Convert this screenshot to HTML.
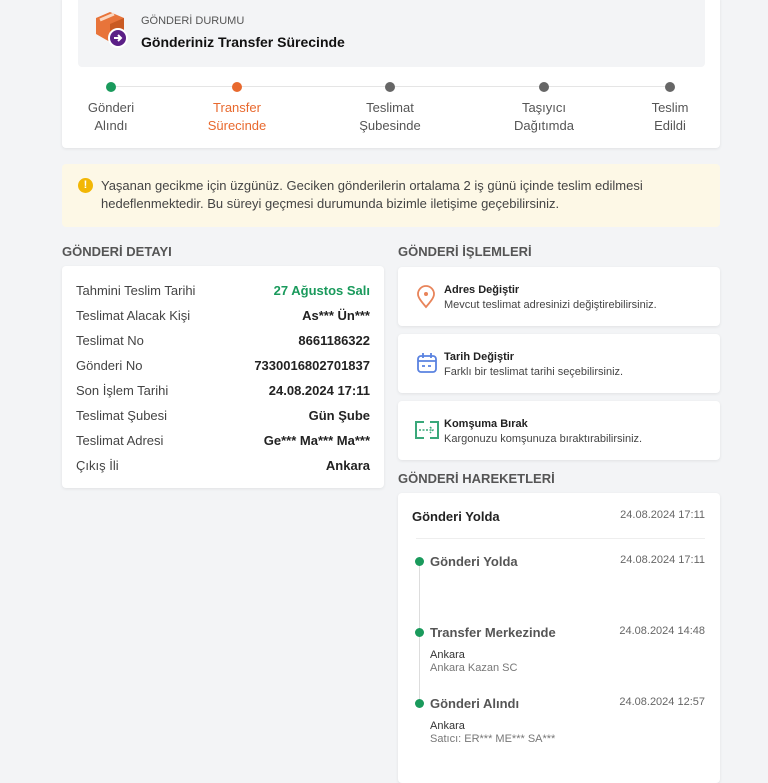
<!DOCTYPE html>
<html><head><meta charset="utf-8"><style>
*{margin:0;padding:0;box-sizing:border-box}
body{width:768px;height:768px;overflow:hidden;background:#f3f4f6;font-family:"Liberation Sans",sans-serif;position:relative;color:#222}
.a{position:absolute}
.card{position:absolute;background:#fff;border-radius:4px;box-shadow:0 1px 3px rgba(0,0,0,.08)}
.t{position:absolute;white-space:nowrap}
.step{position:absolute;text-align:center;font-size:13px;color:#555;line-height:18px;width:100px}
.dot{position:absolute;width:10px;height:10px;border-radius:50%;background:#666;top:82px}
.row{position:absolute;left:14px;right:14px;font-size:13px;color:#444}
.row b{position:absolute;right:0;font-weight:bold;color:#222}
.h{font-size:13px;font-weight:bold;color:#555;position:absolute}
.op .t1{font-size:11px;font-weight:bold;color:#222;left:46px;top:17px}
.op .t2{font-size:11px;color:#444;left:46px;top:32px}
.gd{position:absolute;width:9px;height:9px;border-radius:50%;background:#1a9a5c;left:17px}
</style></head><body>
<div class="card" style="left:62px;top:-4px;width:658px;height:152px">
 <div class="a" style="left:16px;top:0;width:627px;height:71px;background:#f3f4f6;border-radius:4px"></div>
 <svg class="a" style="left:32px;top:14px" width="36" height="38" viewBox="0 0 36 38"><path d="M2 8 L16 2 L30 8 L30 24 L16 32 L2 24Z" fill="#e8743a"/><path d="M16 14 L30 8 L30 24 L16 32Z" fill="#c95a22"/><path d="M6 10 L20 4" stroke="#fbd7c0" stroke-width="3"/><circle cx="24" cy="28" r="9" fill="#5b1f87" stroke="#fff" stroke-width="2"/><path d="M20 28h7M24 25l3 3-3 3" stroke="#fff" stroke-width="2" fill="none"/></svg>
 <div class="t" style="left:79px;top:19px;font-size:11px;color:#555">GÖNDERİ DURUMU</div>
 <div class="t" style="left:79px;top:38px;font-size:14px;font-weight:bold;color:#111">Gönderiniz Transfer Sürecinde</div>
 <div class="a" style="left:49px;top:90px;width:560px;height:1px;background:#e5e5e5"></div>
 <div class="dot" style="left:44px;top:86px;background:#1a9a5c"></div>
 <div class="dot" style="left:170px;top:86px;background:#e8692e"></div>
 <div class="dot" style="left:323px;top:86px"></div>
 <div class="dot" style="left:477px;top:86px"></div>
 <div class="dot" style="left:603px;top:86px"></div>
 <div class="step" style="left:-1px;top:103px">Gönderi<br>Alındı</div>
 <div class="step" style="left:125px;top:103px;color:#e8692e">Transfer<br>Sürecinde</div>
 <div class="step" style="left:278px;top:103px">Teslimat<br>Şubesinde</div>
 <div class="step" style="left:432px;top:103px">Taşıyıcı<br>Dağıtımda</div>
 <div class="step" style="left:558px;top:103px">Teslim<br>Edildi</div>
</div>
<div class="a" style="left:62px;top:164px;width:658px;height:63px;background:#fdf8e6;border-radius:4px">
 <div class="a" style="left:16px;top:14px;width:15px;height:15px;border-radius:50%;background:#f2b705;color:#fff;font-size:11px;font-weight:bold;text-align:center;line-height:15px">!</div>
 <div class="a" style="left:39px;top:13px;font-size:13px;line-height:18px;color:#444;width:610px">Yaşanan gecikme için üzgünüz. Geciken gönderilerin ortalama 2 iş günü içinde teslim edilmesi hedeflenmektedir. Bu süreyi geçmesi durumunda bizimle iletişime geçebilirsiniz.</div>
</div>
<div class="h" style="left:62px;top:244px">GÖNDERİ DETAYI</div>
<div class="h" style="left:398px;top:244px">GÖNDERİ İŞLEMLERİ</div>
<div class="card" style="left:62px;top:266px;width:322px;height:222px">
 <div class="row" style="top:17px">Tahmini Teslim Tarihi<b style="color:#1a9a5c">27 Ağustos Salı</b></div>
 <div class="row" style="top:42px">Teslimat Alacak Kişi<b>As*** Ün***</b></div>
 <div class="row" style="top:67px">Teslimat No<b>8661186322</b></div>
 <div class="row" style="top:92px">Gönderi No<b>7330016802701837</b></div>
 <div class="row" style="top:117px">Son İşlem Tarihi<b>24.08.2024 17:11</b></div>
 <div class="row" style="top:142px">Teslimat Şubesi<b>Gün Şube</b></div>
 <div class="row" style="top:167px">Teslimat Adresi<b>Ge*** Ma*** Ma***</b></div>
 <div class="row" style="top:192px">Çıkış İli<b>Ankara</b></div>
</div>
<div class="card op" style="left:398px;top:267px;width:322px;height:59px">
 <svg class="a" style="left:18px;top:18px" width="20" height="24" viewBox="0 0 20 24"><path d="M10 22C4 15 2 12 2 9a8 8 0 0116 0c0 3-2 6-8 13z" fill="none" stroke="#e8845a" stroke-width="1.8"/><circle cx="10" cy="9" r="2" fill="#e8845a"/></svg>
 <div class="t t1">Adres Değiştir</div><div class="t t2">Mevcut teslimat adresinizi değiştirebilirsiniz.</div>
</div>
<div class="card op" style="left:398px;top:334px;width:322px;height:59px">
 <svg class="a" style="left:18px;top:18px" width="22" height="22" viewBox="0 0 22 22"><rect x="2" y="4" width="18" height="16" rx="3" fill="none" stroke="#5a82e0" stroke-width="1.8"/><path d="M2 9h18M7 1v5M15 1v5M6 14h3M12 14h3" stroke="#5a82e0" stroke-width="1.8"/></svg>
 <div class="t t1">Tarih Değiştir</div><div class="t t2">Farklı bir teslimat tarihi seçebilirsiniz.</div>
</div>
<div class="card op" style="left:398px;top:401px;width:322px;height:59px">
 <svg class="a" style="left:16px;top:19px" width="26" height="20" viewBox="0 0 26 20"><path d="M10 2H2v16h8M16 2h8v16h-8" fill="none" stroke="#3aa87a" stroke-width="2"/><path d="M5 10h14M16 7l3 3-3 3" stroke="#3aa87a" stroke-width="1.5" fill="none" stroke-dasharray="2 1.5"/></svg>
 <div class="t t1">Komşuma Bırak</div><div class="t t2">Kargonuzu komşunuza bıraktırabilirsiniz.</div>
</div>
<div class="h" style="left:398px;top:471px">GÖNDERİ HAREKETLERİ</div>
<div class="card" style="left:398px;top:493px;width:322px;height:290px">
 <div class="t" style="left:14px;top:16px;font-size:13px;font-weight:bold;color:#222">Gönderi Yolda</div>
 <div class="t" style="right:15px;top:16px;font-size:11px;color:#666">24.08.2024 17:11</div>
 <div class="a" style="left:18px;right:15px;top:45px;height:1px;background:#eee"></div>
 <div class="a" style="left:21px;top:70px;width:1px;height:140px;background:#ddd"></div>
 <div class="gd" style="top:64px"></div>
 <div class="t" style="left:32px;top:61px;font-size:13px;font-weight:bold;color:#555">Gönderi Yolda</div>
 <div class="t" style="right:15px;top:61px;font-size:11px;color:#666">24.08.2024 17:11</div>
 <div class="gd" style="top:135px"></div>
 <div class="t" style="left:32px;top:132px;font-size:13px;font-weight:bold;color:#555">Transfer Merkezinde</div>
 <div class="t" style="right:15px;top:132px;font-size:11px;color:#666">24.08.2024 14:48</div>
 <div class="t" style="left:32px;top:156px;font-size:11px;color:#333">Ankara</div>
 <div class="t" style="left:32px;top:169px;font-size:11px;color:#777">Ankara Kazan SC</div>
 <div class="gd" style="top:206px"></div>
 <div class="t" style="left:32px;top:203px;font-size:13px;font-weight:bold;color:#555">Gönderi Alındı</div>
 <div class="t" style="right:15px;top:203px;font-size:11px;color:#666">24.08.2024 12:57</div>
 <div class="t" style="left:32px;top:227px;font-size:11px;color:#333">Ankara</div>
 <div class="t" style="left:32px;top:240px;font-size:11px;color:#777">Satıcı: ER*** ME*** SA***</div>
</div>
</body></html>
